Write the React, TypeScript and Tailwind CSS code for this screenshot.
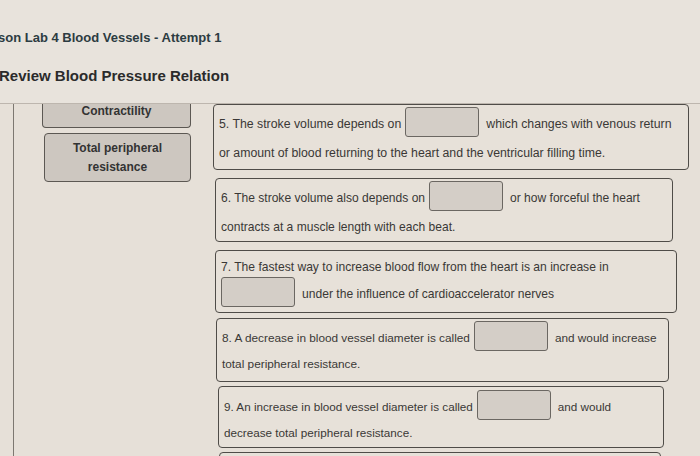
import React from "react";

type Part = { text?: string; blank?: boolean };

// widths/offsets follow the slight perspective of the screen in the photo
const questions: { id: number; row1: Part[]; row2: Part[]; box: string; row2h: string }[] = [
  {
    id: 5,
    row1: [
      { text: "5. The stroke volume depends on" },
      { blank: true },
      { text: "which changes with venous return" },
    ],
    row2: [{ text: "or amount of blood returning to the heart and the ventricular filling time." }],
    box: "mt-0 ml-0 w-[476px] h-[66px] text-[12.3px]",
    row2h: "h-[28px]",
  },
  {
    id: 6,
    row1: [
      { text: "6. The stroke volume also depends on" },
      { blank: true },
      { text: "or how forceful the heart" },
    ],
    row2: [{ text: "contracts at a muscle length with each beat." }],
    box: "mt-[8px] ml-[2px] w-[458px] h-[64px] text-[12.05px]",
    row2h: "h-[28px]",
  },
  {
    id: 7,
    row1: [{ text: "7. The fastest way to increase blood flow from the heart is an increase in" }],
    row2: [{ blank: true }, { text: "under the influence of cardioaccelerator nerves" }],
    box: "mt-[8px] ml-[2px] w-[462px] h-[63px] text-[12.1px]",
    row2h: "h-[30px]",
  },
  {
    id: 8,
    row1: [
      { text: "8. A decrease in blood vessel diameter is called" },
      { blank: true },
      { text: "and would increase" },
    ],
    row2: [{ text: "total peripheral resistance." }],
    box: "mt-[5px] ml-[3px] w-[453px] h-[64px] text-[11.8px]",
    row2h: "h-[22px]",
  },
  {
    id: 9,
    row1: [
      { text: "9. An increase in blood vessel diameter is called" },
      { blank: true },
      { text: "and would" },
    ],
    row2: [{ text: "decrease total peripheral resistance." }],
    box: "mt-[4px] ml-[5px] w-[446px] h-[62px] text-[11.7px]",
    row2h: "h-[22px]",
  },
];

function Blank() {
  return (
    <span className="inline-block w-[74px] h-[30px] shrink-0 rounded-[3px] border-[1.5px] border-[#6b6762] bg-[#d4cec7]" />
  );
}

function Row({ parts, h }: { parts: Part[]; h: string }) {
  return (
    <div className={`flex items-center gap-[4px] ${h}`}>
      {parts.map((p, i) =>
        p.blank ? (
          <span key={i} className="mr-[3px]">
            <Blank />
          </span>
        ) : (
          <span key={i} className="whitespace-nowrap">
            {p.text}
          </span>
        )
      )}
    </div>
  );
}

export default function App() {
  return (
    <div className="w-[700px] h-[456px] overflow-hidden bg-[#e6e0d8] text-[#3a3836] font-['Liberation_Sans',Arial,sans-serif]">
      {/* Header */}
      <div className="h-[103px] bg-[#e8e3dc]">
        <div className="pt-[29px] -ml-[2px] text-[13px] font-bold text-[#2c3c42] leading-[17px]">
          son Lab 4 Blood Vessels - Attempt 1
        </div>
        <div className="mt-[20px] -ml-[1px] text-[15px] font-bold text-[#2b2b2b] leading-[20px]">
          Review Blood Pressure Relation
        </div>
      </div>

      {/* Panel */}
      <div className="flex border-t border-[#bdb6ae] h-[360px]">
        <div className="ml-[13px] w-[200px] border-l border-[#7d7871] flex flex-col pl-[28px] pr-[22px] gap-[5px]">
          <div className="h-[24px] flex items-start justify-center rounded-b-[4px] border-x-[1.5px] border-b-[1.5px] border-[#5c5853] bg-[#cdc7c0] text-[12px] font-bold text-[#333] leading-[15px]">
            Contractility
          </div>
          <div className="ml-[2px] h-[49px] flex items-center justify-center text-center rounded-[4px] border-[1.5px] border-[#5c5853] bg-[#cdc7c0] text-[12px] font-bold text-[#333] leading-[19px]">
            Total peripheral
            <br />
            resistance
          </div>
        </div>

        <div className="flex flex-col">
          {questions.map((q) => (
            <div
              key={q.id}
              className={`${q.box} shrink-0 rounded-[4px] border-[1.5px] border-[#4f4c48] bg-[#e7e1d9] px-[5px] pt-[4px] leading-[15px]`}
            >
              <Row parts={q.row1} h={q.row1.some((p) => p.blank) ? "h-[30px]" : "h-[24px]"} />
              <Row parts={q.row2} h={q.row2h} />
            </div>
          ))}
          <div className="mt-[4px] ml-[6px] w-[442px] h-[40px] shrink-0 rounded-[4px] border-[1.5px] border-[#4f4c48] bg-[#e7e1d9]" />
        </div>
      </div>
    </div>
  );
}
